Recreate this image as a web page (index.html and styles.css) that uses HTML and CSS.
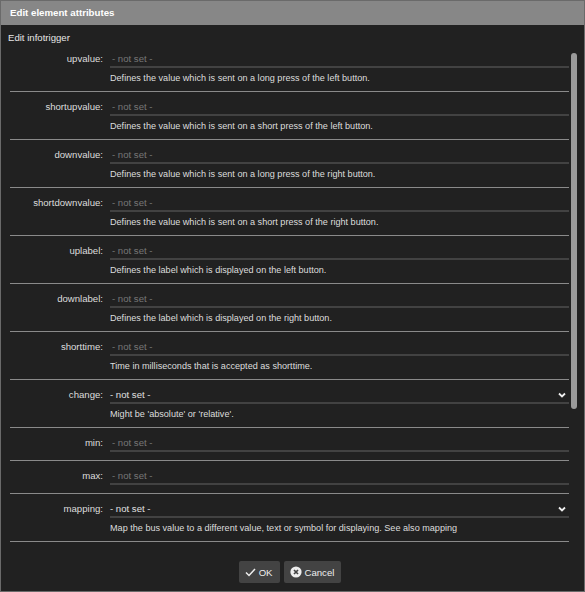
FILE: index.html
```html
<!DOCTYPE HTML>
<html lang="en">
  <head>
    <title>Edit element attributes</title>
    <meta charset="utf-8">
    <link rel="stylesheet" href="styles.css">
  </head>
  <body>

  <div class="dialog">
    <div class="dialog-title">Edit element attributes</div>
    <div class="element-name">Edit infotrigger</div>

    <div class="attr-list">
      <div class="attr">
        <label class="attr-label">upvalue:</label>
        <input class="attr-input" type="text" placeholder="- not set -">
        <div class="attr-desc">Defines the value which is sent on a long press of the left button.</div>
      </div>
      <div class="attr">
        <label class="attr-label">shortupvalue:</label>
        <input class="attr-input" type="text" placeholder="- not set -">
        <div class="attr-desc">Defines the value which is sent on a short press of the left button.</div>
      </div>
      <div class="attr">
        <label class="attr-label">downvalue:</label>
        <input class="attr-input" type="text" placeholder="- not set -">
        <div class="attr-desc">Defines the value which is sent on a long press of the right button.</div>
      </div>
      <div class="attr">
        <label class="attr-label">shortdownvalue:</label>
        <input class="attr-input" type="text" placeholder="- not set -">
        <div class="attr-desc">Defines the value which is sent on a short press of the right button.</div>
      </div>
      <div class="attr">
        <label class="attr-label">uplabel:</label>
        <input class="attr-input" type="text" placeholder="- not set -">
        <div class="attr-desc">Defines the label which is displayed on the left button.</div>
      </div>
      <div class="attr">
        <label class="attr-label">downlabel:</label>
        <input class="attr-input" type="text" placeholder="- not set -">
        <div class="attr-desc">Defines the label which is displayed on the right button.</div>
      </div>
      <div class="attr">
        <label class="attr-label">shorttime:</label>
        <input class="attr-input" type="text" placeholder="- not set -">
        <div class="attr-desc">Time in milliseconds that is accepted as shorttime.</div>
      </div>
      <div class="attr">
        <label class="attr-label">change:</label>
        <div class="attr-select">
          <span>- not set -</span>
          <svg class="chevron" width="8" height="6" viewBox="0 0 8 6"><polyline points="1,1.5 4,4.5 7,1.5" fill="none" stroke="#eee" stroke-width="1.8"/></svg>
        </div>
        <div class="attr-desc">Might be 'absolute' or 'relative'.</div>
      </div>
      <div class="attr">
        <label class="attr-label">min:</label>
        <input class="attr-input" type="text" placeholder="- not set -">
      </div>
      <div class="attr">
        <label class="attr-label">max:</label>
        <input class="attr-input" type="text" placeholder="- not set -">
      </div>
      <div class="attr">
        <label class="attr-label">mapping:</label>
        <div class="attr-select">
          <span>- not set -</span>
          <svg class="chevron" width="8" height="6" viewBox="0 0 8 6"><polyline points="1,1.5 4,4.5 7,1.5" fill="none" stroke="#eee" stroke-width="1.8"/></svg>
        </div>
        <div class="attr-desc">Map the bus value to a different value, text or symbol for displaying. See also mapping</div>
      </div>
    </div>

    <div class="scroll-thumb"></div>

    <div class="dialog-buttons">
      <button class="btn">
        <svg width="11" height="9" viewBox="0 0 11 9"><polyline points="1,4.5 4,7.5 10,1" fill="none" stroke="#eee" stroke-width="1.5"/></svg>
        <span>OK</span>
      </button>
      <button class="btn">
        <svg width="12" height="12" viewBox="0 0 12 12"><circle cx="6" cy="6" r="5.6" fill="#eee"/><path d="M4 4 L8 8 M8 4 L4 8" stroke="#444" stroke-width="1.7"/></svg>
        <span>Cancel</span>
      </button>
    </div>
  </div>

  </body>
</html>
```

FILE: styles.css
```css
html {
  height: 100%;
}
body {
  margin: 0;
  padding: 0;
  background: #212121;
  color: #dddddd;
  font-family: "Liberation Sans", Arial, sans-serif;
  font-size: 9.6px;
}

.dialog {
  position: relative;
  display: flex;
  flex-direction: column;
  box-sizing: border-box;
  width: 585px;
  height: 592px;
  border: 1px solid #6a6a6a;
  background: #212121;
}

.dialog-title {
  height: 24px;
  line-height: 24px;
  padding-left: 9px;
  background: #878787;
  color: #ffffff;
  font-weight: bold;
  font-size: 9.7px;
}

.element-name {
  padding: 6px 7px 0;
  line-height: 13px;
  color: #e6e6e6;
}

.attr-list {
  height: 506px;
  overflow: hidden;
  margin-right: 15px;
  padding-left: 9px;
  box-sizing: border-box;
}

.scroll-thumb {
  position: absolute;
  left: 570px;
  top: 52px;
  width: 6px;
  height: 356px;
  border-radius: 3px;
  background: #9a9a9a;
}

.attr {
  display: grid;
  grid-template-columns: 93px 1fr;
  column-gap: 7px;
  padding: 7px 0 8px;
  border-bottom: 1px solid #8a8a8a;
}

.attr-label {
  text-align: right;
  line-height: 15px;
  color: #dddddd;
}

.attr-input {
  box-sizing: border-box;
  width: 100%;
  height: 17px;
  margin: 0;
  padding: 0 0 0 2px;
  border: 0;
  border-bottom: 2px solid #424242;
  background: transparent;
  color: #dddddd;
  font: 9.6px "Liberation Sans", Arial, sans-serif;
  line-height: 15px;
  outline: none;
}
.attr-input::placeholder {
  color: #777777;
}

.attr-select {
  display: flex;
  align-items: center;
  justify-content: space-between;
  height: 15px;
  padding-right: 3px;
  border-bottom: 2px solid #424242;
  color: #e0e0e0;
}

.chevron {
  display: block;
}

.attr-desc {
  grid-column: 2;
  margin: 4px 0 -1px;
  line-height: 12px;
  font-size: 9.1px;
  color: #dddddd;
}

.dialog-buttons {
  flex: 1;
  display: flex;
  justify-content: center;
  align-items: flex-start;
  gap: 4px;
  padding: 11px 5px 0 0;
}

.btn {
  display: flex;
  align-items: center;
  gap: 3px;
  height: 22px;
  padding: 0 7px 0 6px;
  border: 0;
  border-radius: 2px;
  background: #434343;
  color: #eeeeee;
  font: 9.6px "Liberation Sans", Arial, sans-serif;
}
```
